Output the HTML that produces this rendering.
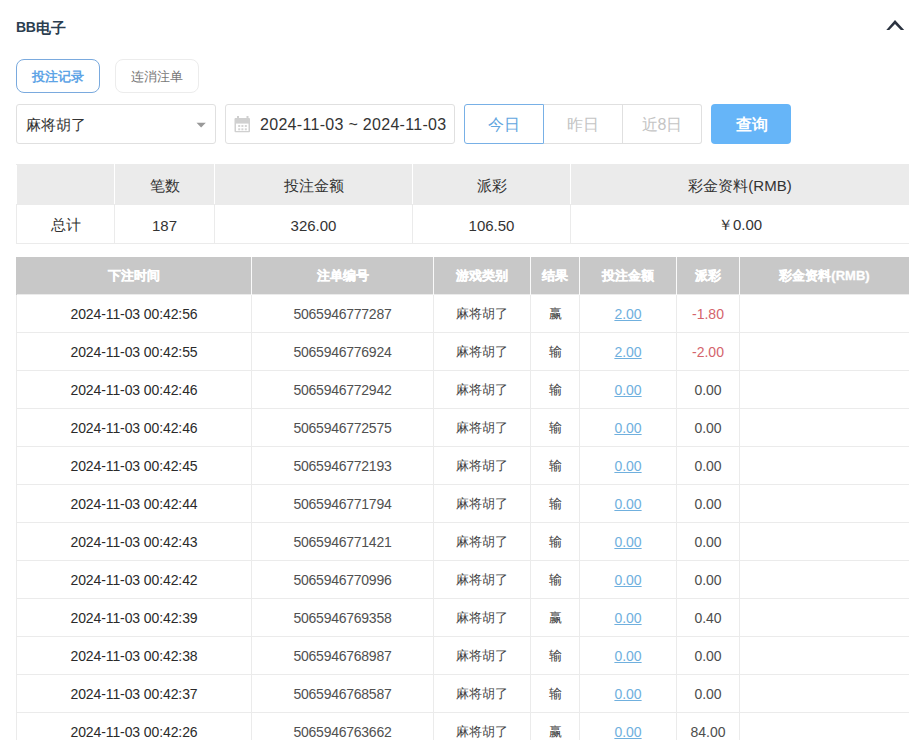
<!DOCTYPE html>
<html><head><meta charset="utf-8">
<style>
*{box-sizing:border-box;margin:0;padding:0}
html,body{width:909px;height:740px;overflow:hidden;background:#fff;font-family:"Liberation Sans",sans-serif;color:#333}
.abs{position:absolute}
.title{left:16px;top:18px;font-size:15px;font-weight:bold;color:#2c3e50;line-height:18px}
.caret{left:886px;top:19px;width:19px;height:12px}
.tab{position:absolute;top:59px;height:34px;width:84px;border:1px solid #ececec;border-radius:8px;font-size:13px;line-height:33px;text-align:center;color:#777}
.tab.on{border-color:#7aaade;color:#5ea4e6;font-weight:bold}
.box{position:absolute;top:104px;height:40px;border:1px solid #e0e0e0;border-radius:3px;background:#fff}
.sel{left:16px;width:200px;font-size:15px;line-height:39px;padding-left:9px;color:#333}
.tri{position:absolute;left:179px;top:17px;width:0;height:0;border-left:5px solid transparent;border-right:5px solid transparent;border-top:5px solid #888}
.date{left:225px;width:230px;font-size:16px;line-height:39px;padding-left:34px;color:#333;letter-spacing:0.3px;white-space:nowrap}
.btn{position:absolute;top:104px;height:40px;width:80px;font-size:16px;line-height:39px;text-align:center;color:#c4c4c4;border:1px solid #e0e0e0}
.btn.on{border-color:#78b0e6;color:#62a6e0;z-index:2}
.query{position:absolute;left:711px;top:104px;width:80px;height:40px;background:#66b5f8;color:#fff;border-radius:4px;font-size:16px;font-weight:bold;line-height:41px;text-align:center;padding-left:1px}
table{border-collapse:collapse;position:absolute;table-layout:fixed}
td,th{text-align:center;overflow:hidden;white-space:nowrap}
.sum{left:16px;top:164px;width:894px;font-size:15px}
.sum td{border:1px solid #ebebeb;height:39px;color:#333;padding-top:3px}
.sum tr.h td{background:#ebebeb;height:40px;padding-top:3px;border-color:#ebebeb #fff #ebebeb #fff}
.main{left:16px;top:257px;width:894px;font-size:14px}
.main th{background:#c8c8c8;color:#fff;font-weight:bold;height:37px;border:1px solid #c8c8c8;border-right-color:#fafafa;border-top:none;border-bottom:none;font-size:13px;-webkit-text-stroke:0.3px #fff;padding-top:2px}
.main td{border:1px solid #ebebeb;height:38px;color:#4d4d4d;padding-top:2px}
.main td.no{color:#505050;letter-spacing:-0.25px}
.main td.dt{letter-spacing:-0.1px;color:#2a2a2a}
.main td.cn{font-size:13px;color:#444}
.main td.r{color:#3a3a3a}
.lnk{color:#70b0de;text-decoration:underline}
.main td.red{color:#d4646c}
</style></head><body>
<div class="abs title"><span style="font-size:14px;letter-spacing:-0.3px;vertical-align:0.5px">BB</span>电子</div>
<svg class="abs" style="left:884px;top:18px" width="22" height="14" viewBox="0 0 22 14"><path d="M2.3 12 L11 2.1 L20.2 12 L16.8 12 L11 5.9 L5.3 12 Z" fill="#2b3340"/></svg>
<div class="tab on" style="left:16px">投注记录</div>
<div class="tab" style="left:115px">连消注单</div>
<div class="box sel">麻将胡了<svg class="abs" style="left:178px;top:17px" width="12" height="7" viewBox="0 0 12 7"><path d="M1.5 0.7 L10.8 0.7 L6.15 5.5 Z" fill="#999"/></svg></div>
<div class="box date"><svg class="abs" style="left:8px;top:11px" width="17" height="17" viewBox="0 0 17 17"><rect x="0.5" y="2" width="15.5" height="14.2" rx="1" fill="#d0d0d0"/><rect x="2" y="7.6" width="12.5" height="7.4" fill="#fff"/><rect x="3" y="0" width="2" height="4.5" fill="#d0d0d0"/><rect x="12.5" y="0" width="2" height="4.5" fill="#d0d0d0"/><g fill="#d4d4d4"><rect x="4.2" y="9" width="2" height="2"/><rect x="7.4" y="9" width="2" height="2"/><rect x="10.8" y="9" width="2" height="2"/><rect x="4.2" y="12.3" width="2" height="2"/><rect x="7.4" y="12.3" width="2" height="2"/><rect x="10.8" y="12.3" width="2" height="2"/></g></svg>2024-11-03 ~ 2024-11-03</div>
<div class="btn on" style="left:464px;border-radius:3px 0 0 3px">今日</div>
<div class="btn" style="left:544px;border-left:none;width:79px">昨日</div>
<div class="btn" style="left:623px;border-left:none;width:79px;border-radius:0 3px 3px 0">近8日</div>
<div class="query">查询</div>

<table class="sum">
<colgroup><col style="width:98px"><col style="width:100px"><col style="width:198px"><col style="width:158px"><col></colgroup>
<tr class="h"><td></td><td>笔数</td><td>投注金额</td><td>派彩</td><td>彩金资料(RMB)</td></tr>
<tr><td>总计</td><td>187</td><td>326.00</td><td>106.50</td><td>￥0.00</td></tr>
</table>

<table class="main">
<colgroup><col style="width:235px"><col style="width:182px"><col style="width:97px"><col style="width:49px"><col style="width:97px"><col style="width:63px"><col></colgroup>
<tr><th>下注时间</th><th>注单编号</th><th>游戏类别</th><th>结果</th><th>投注金额</th><th>派彩</th><th>彩金资料(RMB)</th></tr>
<tr><td class="dt">2024-11-03 00:42:56</td><td class="no">5065946777287</td><td class="cn">麻将胡了</td><td class="cn r">赢</td><td><span class="lnk">2.00</span></td><td class="red">-1.80</td><td></td></tr>
<tr><td class="dt">2024-11-03 00:42:55</td><td class="no">5065946776924</td><td class="cn">麻将胡了</td><td class="cn r">输</td><td><span class="lnk">2.00</span></td><td class="red">-2.00</td><td></td></tr>
<tr><td class="dt">2024-11-03 00:42:46</td><td class="no">5065946772942</td><td class="cn">麻将胡了</td><td class="cn r">输</td><td><span class="lnk">0.00</span></td><td>0.00</td><td></td></tr>
<tr><td class="dt">2024-11-03 00:42:46</td><td class="no">5065946772575</td><td class="cn">麻将胡了</td><td class="cn r">输</td><td><span class="lnk">0.00</span></td><td>0.00</td><td></td></tr>
<tr><td class="dt">2024-11-03 00:42:45</td><td class="no">5065946772193</td><td class="cn">麻将胡了</td><td class="cn r">输</td><td><span class="lnk">0.00</span></td><td>0.00</td><td></td></tr>
<tr><td class="dt">2024-11-03 00:42:44</td><td class="no">5065946771794</td><td class="cn">麻将胡了</td><td class="cn r">输</td><td><span class="lnk">0.00</span></td><td>0.00</td><td></td></tr>
<tr><td class="dt">2024-11-03 00:42:43</td><td class="no">5065946771421</td><td class="cn">麻将胡了</td><td class="cn r">输</td><td><span class="lnk">0.00</span></td><td>0.00</td><td></td></tr>
<tr><td class="dt">2024-11-03 00:42:42</td><td class="no">5065946770996</td><td class="cn">麻将胡了</td><td class="cn r">输</td><td><span class="lnk">0.00</span></td><td>0.00</td><td></td></tr>
<tr><td class="dt">2024-11-03 00:42:39</td><td class="no">5065946769358</td><td class="cn">麻将胡了</td><td class="cn r">赢</td><td><span class="lnk">0.00</span></td><td>0.40</td><td></td></tr>
<tr><td class="dt">2024-11-03 00:42:38</td><td class="no">5065946768987</td><td class="cn">麻将胡了</td><td class="cn r">输</td><td><span class="lnk">0.00</span></td><td>0.00</td><td></td></tr>
<tr><td class="dt">2024-11-03 00:42:37</td><td class="no">5065946768587</td><td class="cn">麻将胡了</td><td class="cn r">输</td><td><span class="lnk">0.00</span></td><td>0.00</td><td></td></tr>
<tr><td class="dt">2024-11-03 00:42:26</td><td class="no">5065946763662</td><td class="cn">麻将胡了</td><td class="cn r">赢</td><td><span class="lnk">0.00</span></td><td>84.00</td><td></td></tr>
</table>
</body></html>
